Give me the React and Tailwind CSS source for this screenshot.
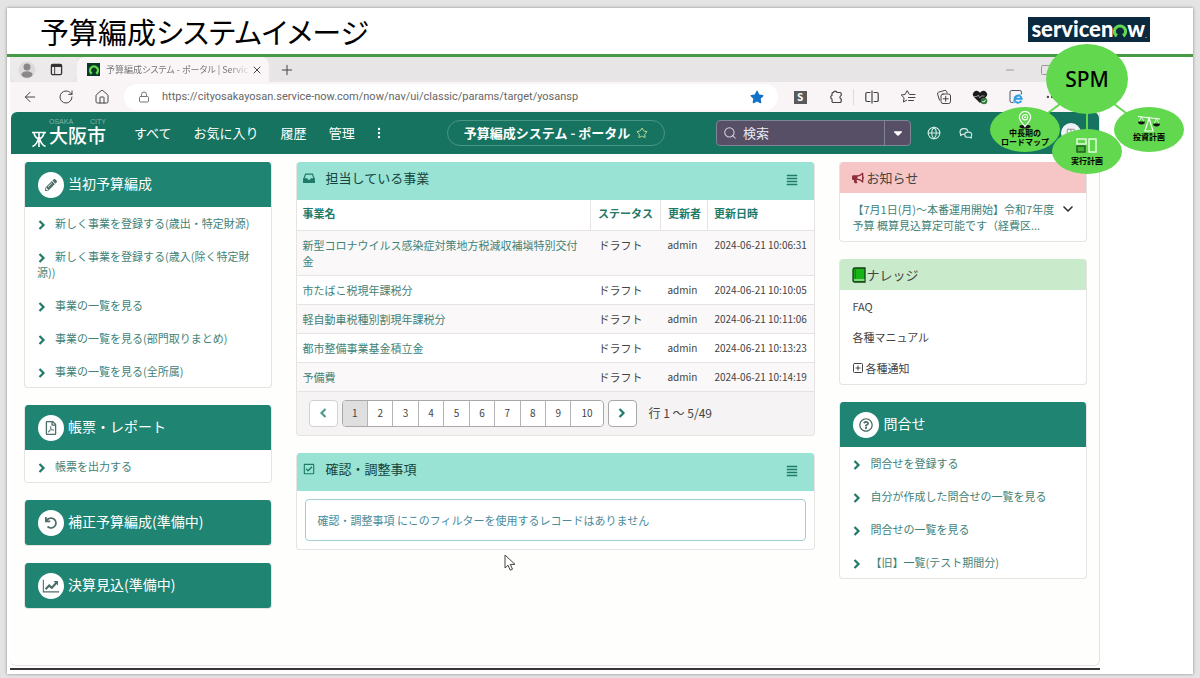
import React, { useState } from 'react';
import {
  FaPencilAlt, FaRegFilePdf, FaUndo,
  FaRegCheckSquare, FaAlignJustify, FaBullhorn, FaRegQuestionCircle, FaStar, FaCaretDown,
} from 'react-icons/fa';
import {
  ArrowLeft, RotateCw, House, Lock, Plus, X, Minus, Square, Columns2, Ellipsis,
  Search, Star, Globe, ChevronDown, SquarePlus,
} from 'lucide-react';

const registerLinks = [
  '新しく事業を登録する(歳出・特定財源)',
  '新しく事業を登録する(歳入(除く特定財源))',
  '事業の一覧を見る',
  '事業の一覧を見る(部門取りまとめ)',
  '事業の一覧を見る(全所属)',
];

const contactLinks = [
  '問合せを登録する',
  '自分が作成した問合せの一覧を見る',
  '問合せの一覧を見る',
  '【旧】一覧(テスト期間分)',
];

const projects = [
  { name: '新型コロナウイルス感染症対策地方税減収補塡特別交付金', updated: '2024-06-21 10:06:31' },
  { name: '市たばこ税現年課税分', updated: '2024-06-21 10:10:05' },
  { name: '軽自動車税種別割現年課税分', updated: '2024-06-21 10:11:06' },
  { name: '都市整備事業基金積立金', updated: '2024-06-21 10:13:23' },
  { name: '予備費', updated: '2024-06-21 10:14:19' },
];

const pages = [1, 2, 3, 4, 5, 6, 7, 8, 9, 10];

function NowRing({ className }) {
  return (
    <svg viewBox="0 0 20 20" className={className} aria-hidden="true">
      <path d="M5.2 17.2A8 8 0 1 1 14.8 17.2" fill="none" stroke="currentColor" strokeWidth="4.4" />
      <path d="M3.2 18.2l2.6-4.4M16.8 18.2l-2.6-4.4" stroke="currentColor" strokeWidth="2.4" />
    </svg>
  );
}

function Chevron({ className }) {
  return (
    <svg viewBox="0 0 10 10" className={className} fill="none" stroke="currentColor" strokeWidth="2.2" aria-hidden="true">
      <path d="M2.5 1l4 4-4 4" />
    </svg>
  );
}

function ChartIcon() {
  return (
    <svg viewBox="0 0 20 16" className="w-[18px] h-4" fill="none" stroke="currentColor" aria-hidden="true">
      <path d="M1.5 1v13.5H19" strokeWidth="1.2" />
      <path d="M4 11.5l4-4 3 2.5 5-5.5" strokeWidth="2.4" />
      <path d="M12.8 2.5h5v5z" fill="currentColor" stroke="none" />
    </svg>
  );
}

function InboxIcon() {
  return (
    <svg viewBox="0 0 14 12" className="w-3 h-3" fill="none" stroke="currentColor" strokeWidth="1.4" aria-hidden="true">
      <path d="M1 7l2-5.5h8L13 7v4H1z" />
      <path d="M1 7h3.500l1 1.800h3L9.500 7H13v4H1z" fill="currentColor" />
    </svg>
  );
}

function TabActionsIcon() {
  return (
    <svg viewBox="0 0 14 14" className="w-[13px] h-[13px]" fill="none" stroke="#333" aria-hidden="true">
      <rect x="1.500" y="1.500" width="11" height="11" rx="1.500" strokeWidth="1.400" />
      <path d="M1.500 3h11" strokeWidth="2.600" />
      <path d="M5 4v8.500" />
    </svg>
  );
}

function ExtensionIcon() {
  return (
    <svg viewBox="0 0 16 16" className="w-4 h-4" fill="none" stroke="currentColor" strokeWidth="1.2" strokeLinejoin="round" aria-hidden="true">
      <path d="M5.500 3.500a1.800 1.800 0 0 1 3.500 0H12a1.200 1.200 0 0 1 1.200 1.200V6.500a1.900 1.900 0 0 0 0 3.600v2.200a1.200 1.200 0 0 1-1.200 1.200H5.200A1.200 1.200 0 0 1 4 12.300V10a1.900 1.900 0 0 1 0-3.600V4.700a1.200 1.200 0 0 1 1.500-1.200z" />
    </svg>
  );
}

function SplitIcon() {
  return (
    <svg viewBox="0 0 16 16" className="w-4 h-4" fill="none" stroke="currentColor" strokeWidth="1.2" aria-hidden="true">
      <path d="M6.500 3.500H3A1.200 1.200 0 0 0 1.800 4.700v6.600A1.200 1.200 0 0 0 3 12.500h3.500M9.500 3.500H13a1.200 1.200 0 0 1 1.200 1.200v6.600a1.200 1.200 0 0 1-1.200 1.200H9.500M8 1.500v13" />
    </svg>
  );
}

function FavoritesIcon() {
  return (
    <svg viewBox="0 0 16 16" className="w-4 h-4" fill="none" stroke="currentColor" strokeLinecap="round" strokeLinejoin="round" aria-hidden="true">
      <path d="M9.2 5.2L7.2 1.6 5.2 5.4 1.2 6l2.9 2.8-.7 4.2 3.3-1.8" />
      <path d="M10 5.5h5M8.5 8.5H15M8.5 11.5h5" />
    </svg>
  );
}

function CollectionsIcon() {
  return (
    <svg viewBox="0 0 16 16" className="w-4 h-4" fill="none" stroke="currentColor" strokeLinecap="round" aria-hidden="true">
      <path d="M3.5 11.2L1.6 5a1.5 1.5 0 0 1 1-1.8l6.2-1.8a1.5 1.5 0 0 1 1.8 1l.4 1.3" />
      <rect x="5" y="5" width="9.5" height="9.5" rx="2" />
      <path d="M9.7 7.3v5M7.2 9.8h5" />
    </svg>
  );
}

function HealthIcon() {
  return (
    <svg viewBox="0 0 16 16" className="w-4 h-4" aria-hidden="true">
      <path d="M8 14L2.2 8.2A3.6 3.6 0 0 1 7 2.8l1 .9 1-.9a3.6 3.6 0 0 1 4.8 5.4z" fill="#1c1c1c" />
      <path d="M2 7.5h3.2l1-1.5 1.6 3 1.3-2h3.5" fill="none" stroke="#a9a9a9" strokeWidth=".8" />
      <circle cx="12" cy="12" r="3.3" fill="#2f7d3b" />
      <path d="M10.5 12l1.1 1.2 2-2.2" fill="none" stroke="#fff" />
    </svg>
  );
}

function IeModeIcon() {
  return (
    <svg viewBox="0 0 16 16" className="w-4 h-4" fill="none" aria-hidden="true">
      <path d="M13.5 5V3.2A1.7 1.7 0 0 0 11.8 1.5H3.7A1.7 1.7 0 0 0 2 3.2v8.600a1.7 1.7 0 0 0 1.700 1.700H5" stroke="#4b5560" />
      <path d="M13.300 11.800A3.600 3.600 0 1 1 13.700 9.700H6.800" stroke="#2d9fe0" strokeWidth="1.900" />
      <path d="M7 13.500c-2 1.500-2.500-1 0-3.800s5.500-5 7.200-4.800" stroke="#2d9fe0" strokeWidth=".8" />
    </svg>
  );
}

function ChatIcon() {
  return (
    <svg viewBox="0 0 16 16" className="w-3.5 h-3.5" fill="none" stroke="currentColor" strokeWidth="1.3" strokeLinejoin="round" aria-hidden="true">
      <path d="M6 9.500H4L1.800 11V9A3.200 3.200 0 0 1 1.200 6.500 4 4 0 0 1 5 3h1.500A3.500 3.500 0 0 1 10 6" />
      <path d="M9.500 7h2a3 3 0 0 1 2.500 4.800v2L12 12.800H9.500a2.900 2.900 0 0 1 0-5.800z" />
    </svg>
  );
}

function BookIcon() {
  return (
    <svg viewBox="0 0 14 16" className="w-3.5 h-4" aria-hidden="true">
      <path d="M1 2.5A1.8 1.8 0 0 1 2.8 1H13v14H2.5A1.5 1.5 0 0 1 1 13.500z" fill="#17b317" stroke="#173d17" strokeWidth="1.3" />
      <path d="M2 13h10.500" stroke="#e6ffe6" strokeWidth="1.2" />
      <path d="M3.300 1.500V12" stroke="#0f7d15" />
    </svg>
  );
}

function CityMark() {
  return (
    <svg viewBox="0 0 16 18" className="w-4 h-[18px]" fill="none" stroke="currentColor" strokeWidth="1.6" aria-hidden="true">
      <path d="M1 2.5h14M3 3c1 4.500 3 5.500 5 5.500S12 7.500 13 3M8 3v14M7 9c-.5 3.500-2.500 6-5.500 7.500M9 9c.5 3.500 2.500 6 5.500 7.500" />
    </svg>
  );
}

function LinkList({ items }) {
  return (
    <ul className="flex flex-col gap-[17px] pl-3 pr-4 py-2 text-[11px] leading-4 text-[#3f8277]">
      {items.map((item) => (
        <li key={item}>
          <Chevron className="inline-block w-2.5 h-2.5 mr-2 text-[#1f7a68]" />
          <a href="#" className="hover:underline">{item}</a>
        </li>
      ))}
    </ul>
  );
}

function MenuCard({ icon, title, children }) {
  return (
    <section className="rounded-sm bg-white border border-t-0 border-[#e6e3e3] overflow-hidden">
      <div className="flex items-center gap-1 h-[45px] pl-[13px] bg-[#208473]">
        <span className="flex items-center justify-center w-[26px] h-[26px] rounded-full bg-white text-[#4d6d68]">{icon}</span>
        <h2 className="pb-1 text-white text-sm leading-5">{title}</h2>
      </div>
      {children}
    </section>
  );
}

function PanelHeader({ icon, title }) {
  return (
    <div className="flex items-center h-[38px] pl-1.5 pr-4 pb-1.5 bg-[#98e3d3] text-[#1f7a68]">
      {icon}
      <h2 className="ml-[11px] text-[13px] leading-5 text-[#17443d]">{title}</h2>
      <button type="button" aria-label="メニュー" className="ml-auto mt-1"><FaAlignJustify className="w-3 h-3" /></button>
    </div>
  );
}

function BrowserBar() {
  return (
    <div>
      <div className="flex items-end h-[25px] bg-[#e7e5e5] text-[#444]">
        <div className="flex items-center h-full w-[67px] pl-2 gap-[14px] bg-[#eceaea] rounded-b-lg">
          <svg viewBox="0 0 18 18" className="w-[18px] h-[18px]" aria-hidden="true">
            <circle cx="9" cy="9" r="8.5" fill="#dcdada" />
            <circle cx="9" cy="6" r="3.5" fill="#8a8888" />
            <ellipse cx="9" cy="13.5" rx="5.5" ry="3.2" fill="#8a8888" />
          </svg>
          <TabActionsIcon />
        </div>
        <div className="flex items-center h-full w-[192px] pl-2.5 pr-1.5 bg-[#faf6f7] rounded-t-lg">
          <span className="flex items-center justify-center w-[13px] h-[13px] shrink-0 bg-[#0c3a2a]">
            <NowRing className="w-2.5 h-2.5 text-[#62d84e]" />
          </span>
          <span className="ml-1.5 flex-1 whitespace-nowrap text-[9px] leading-4 text-[#777] [font-feature-settings:'palt'] [mask-image:linear-gradient(to_right,#000_85%,transparent)]">
            予算編成システム - ポータル | Servic
          </span>
          <button type="button" aria-label="タブを閉じる"><X className="w-3 h-3" strokeWidth={2} /></button>
        </div>
        <button type="button" aria-label="新しいタブ" className="self-center ml-2.5"><Plus className="w-4 h-4" strokeWidth={1.5} /></button>
        <div className="flex items-center gap-6 ml-auto mr-12 h-full text-[#999]">
          <Minus className="w-3 h-3" strokeWidth={2} />
          <Square className="w-3 h-3" strokeWidth={2} />
        </div>
      </div>
      <div className="flex items-center h-[30px] pl-0.5 pr-[30px] bg-[#f9f5f6] text-[#444]">
        <button type="button" aria-label="戻る" className="flex justify-center w-9"><ArrowLeft className="w-4 h-4" strokeWidth={1.5} /></button>
        <button type="button" aria-label="更新" className="flex justify-center w-9"><RotateCw className="w-4 h-4" strokeWidth={1.5} /></button>
        <button type="button" aria-label="ホーム" className="flex justify-center w-9"><House className="w-4 h-4" strokeWidth={1.5} /></button>
        <div className="flex items-center flex-1 h-[26px] ml-1 mr-1 px-3.5 rounded-full bg-white">
          <Lock className="w-3 h-3 text-[#777]" strokeWidth={2} />
          <input
            aria-label="アドレス"
            readOnly
            value="https://cityosakayosan.service-now.com/now/nav/ui/classic/params/target/yosansp"
            className="flex-1 min-w-0 ml-3 bg-transparent outline-none font-['Roboto',sans-serif] text-[11px] leading-4 text-[#666]"
          />
          <FaStar className="w-3.5 h-3.5 text-[#1272c8]" />
        </div>
        <span className="flex justify-center w-9">
          <span className="flex items-center justify-center w-[13px] h-[13px] bg-[#5a5a5a] text-white text-[10px] leading-3 font-bold">S</span>
        </span>
        <span className="flex justify-center w-9 border-r border-[#dcdada]"><ExtensionIcon /></span>
        <span className="flex justify-center w-9"><SplitIcon /></span>
        <span className="flex justify-center w-9"><FavoritesIcon /></span>
        <span className="flex justify-center w-9"><CollectionsIcon /></span>
        <span className="flex justify-center w-9"><HealthIcon /></span>
        <span className="flex justify-center w-9"><IeModeIcon /></span>
        <span className="flex justify-center w-9"><Ellipsis className="w-3.5 h-3.5" strokeWidth={2} /></span>
      </div>
    </div>
  );
}

function PortalHeader() {
  return (
    <header className="grid grid-cols-[1fr_auto_1fr] items-center h-[42px] ml-px pl-5 pr-[18px] rounded-t-md bg-[#15735f] text-white text-[13px] leading-5">
      <div className="flex items-center">
        <div className="flex items-end gap-0.5 mr-7 font-['Liberation_Sans','Noto_Sans_CJK_JP',sans-serif]">
          <CityMark />
          <div>
            <div className="flex justify-between text-[7px] leading-2 text-[#7fb5a8]"><span>OSAKA</span><span>CITY</span></div>
            <div className="text-[19px] leading-[22px] font-medium">大阪市</div>
          </div>
        </div>
        <nav className="flex items-center gap-[22px] whitespace-nowrap">
          <a href="#">すべて</a>
          <a href="#">お気に入り</a>
          <a href="#">履歴</a>
          <a href="#">管理</a>
          <button type="button" aria-label="その他">
            <svg viewBox="0 0 4 12" className="w-1 h-3" fill="currentColor" aria-hidden="true">
              <circle cx="2" cy="2" r="1.2" /><circle cx="2" cy="6" r="1.2" /><circle cx="2" cy="10" r="1.2" />
            </svg>
          </button>
        </nav>
      </div>
      <div className="flex items-center gap-1.5 h-[26px] px-4 rounded-full border border-[#4a9483] font-bold whitespace-nowrap">
        予算編成システム - ポータル
        <Star className="w-3 h-3 text-[#c6dc9a]" strokeWidth={2} />
      </div>
      <div className="flex items-center justify-end">
        <form className="flex items-center w-[195px] h-[26px] rounded-sm border border-[#7f8595] bg-[#564f66]">
          <Search className="w-3.5 h-3.5 ml-1.5 shrink-0 text-[#d5d2dc]" strokeWidth={1.8} />
          <input aria-label="検索" placeholder="検索" className="flex-1 min-w-0 ml-1.5 bg-transparent outline-none text-[13px] leading-5 placeholder:text-[#eceaf0]" />
          <button type="button" aria-label="検索対象" className="flex items-center justify-center w-[26px] h-full border-l border-[#7f8595]">
            <FaCaretDown className="w-3.5 h-3.5" />
          </button>
        </form>
        <Globe className="w-3.5 h-3.5 ml-4 text-[#d8ebe6]" strokeWidth={1.8} />
        <span className="ml-[18px] mr-[88px] text-[#d8ebe6]"><ChatIcon /></span>
        <span className="flex items-center justify-center w-5 h-5 rounded-full bg-[#eef1f6] text-[#888]">
          <Columns2 className="w-2.5 h-2.5" />
        </span>
      </div>
    </header>
  );
}

function ProjectPanel() {
  const [page, setPage] = useState(1);

  return (
    <section className="rounded-sm border border-t-0 border-[#e8e3e3] bg-[#f5f3f3] overflow-hidden">
      <PanelHeader icon={<InboxIcon />} title="担当している事業" />
      <table className="w-full table-fixed bg-white text-left text-[11px] leading-4 text-[#444]">
        <thead className="text-[#1f7a68]">
          <tr className="h-[30px]">
            <th className="pl-1.5 pb-1 font-bold">事業名</th>
            <th className="w-[70px] pl-[7px] pb-1 font-bold border-l border-[#e8e3e3]">ステータス</th>
            <th className="w-[47px] pl-[7px] pb-1 font-bold border-l border-[#e8e3e3]">更新者</th>
            <th className="w-[107px] pl-1.5 pb-1 font-bold border-l border-[#e8e3e3]">更新日時</th>
          </tr>
        </thead>
        <tbody>
          {projects.map((project) => (
            <tr key={project.name} className="border-t border-[#e8e3e3] odd:bg-[#faf8f8] align-top">
              <td className="pl-1.5 pr-2 pt-1.5 pb-1.5"><a href="#" className="text-[#3f8277]">{project.name}</a></td>
              <td className="pl-2 pt-1.5 pb-1.5">ドラフト</td>
              <td className="pl-[7px] pt-1.5 pb-1.5 text-[10px]">admin</td>
              <td className="pl-[7px] pt-1.5 pb-1.5 text-[10px] whitespace-nowrap">{project.updated}</td>
            </tr>
          ))}
        </tbody>
      </table>
      <div className="flex items-center gap-1 px-3 pt-2 pb-2 border-t border-[#e8e3e3] text-[10px] leading-4 text-[#444]">
        <button type="button" aria-label="前へ" className="flex items-center justify-center w-[29px] h-[27px] rounded-sm border border-[#d3d0d0] bg-white text-[#4f9a8a]">
          <Chevron className="w-2.5 h-2.5 rotate-180" />
        </button>
        <div className="flex w-[262px] rounded-sm border border-[#a9a7a7] bg-white overflow-hidden">
          {pages.map((n) => (
            <button
              key={n}
              type="button"
              onClick={() => setPage(n)}
              className={`flex-1 last:flex-none last:w-8 h-[25px] border-l border-[#b5b3b3] first:border-l-0 ${n === page ? 'bg-[#e0dfdf]' : 'bg-white'}`}
            >
              {n}
            </button>
          ))}
        </div>
        <button type="button" aria-label="次へ" className="flex items-center justify-center w-[29px] h-[27px] rounded-sm border border-[#a9a7a7] bg-white text-[#1f7a68]">
          <Chevron className="w-2.5 h-2.5" />
        </button>
        <span className="ml-2 text-xs leading-4">行 1 〜 5/49</span>
      </div>
    </section>
  );
}

function SpmDiagram() {
  return (
    <div className="absolute top-9 right-[9px] w-[194px] h-[130px] text-black font-['Liberation_Sans','Noto_Sans_CJK_JP',sans-serif]">
      <svg viewBox="0 0 194 130" className="absolute inset-0 w-full h-full" aria-hidden="true">
        <path d="M97 40L35 86M97 40V107M97 40L159 86" stroke="#62d84e" strokeWidth="2" />
      </svg>
      <div className="absolute left-[56px] top-0 flex items-center justify-center w-[82px] h-[70px] rounded-[50%] bg-[#62d84e] font-['Noto_Sans',sans-serif] text-[21px] leading-6 font-medium">SPM</div>
      <div className="absolute left-0 top-[63px] flex flex-col items-center w-[70px] h-[45px] pt-1 rounded-[50%] bg-[#62d84e] text-[8px] leading-[9px] font-bold whitespace-nowrap">
        <svg viewBox="0 0 16 19" className="w-4 h-[18px]" fill="none" aria-hidden="true">
          <ellipse cx="8" cy="16.5" rx="6" ry="2" fill="#111" />
          <path d="M8 16.5C5 12 2 10 2 6.500a6 6 0 0 1 12 0C14 10 11 12 8 16.500z" fill="#62d84e" stroke="#fff" strokeWidth="1.2" />
          <circle cx="8" cy="6.5" r="2.8" stroke="#fff" strokeWidth="1.2" />
          <circle cx="8" cy="6.5" r="1" fill="#fff" />
        </svg>
        <span>中長期の</span>
        <span>ロードマップ</span>
      </div>
      <div className="absolute left-[62px] top-[85px] flex flex-col items-center justify-between w-[70px] h-[45px] pt-2 pb-2 rounded-[50%] bg-[#62d84e] text-[8px] leading-[9px] font-bold">
        <svg viewBox="0 0 22 17" className="w-[22px] h-[17px]" fill="none" stroke="#e9ffe4" strokeWidth="1.4" aria-hidden="true">
          <rect x="1" y="2" width="9" height="5" />
          <rect x="1" y="9" width="8" height="6" fill="#43b337" stroke="#1f5a1b" />
          <rect x="13" y="2" width="7" height="13" />
        </svg>
        <span>実行計画</span>
      </div>
      <div className="absolute left-[124px] top-[63px] flex flex-col items-center justify-between w-[70px] h-[45px] pt-2 pb-2.5 rounded-[50%] bg-[#62d84e] text-[8px] leading-[9px] font-bold">
        <svg viewBox="0 0 24 17" className="w-6 h-[17px]" fill="none" stroke="#fff" strokeWidth="1.2" aria-hidden="true">
          <path d="M1 1.5l22 2.500M12 3l-4 13h8z" />
          <path d="M1 6.5a3.500 3 0 0 0 7 0zM16 8.500a3.500 3 0 0 0 7 0z" fill="#111" stroke="none" />
          <path d="M4.5 2L2 6.500M4.500 2L7 6.500M19.500 4L17 8.500M19.500 4L22 8.500" strokeWidth=".7" />
        </svg>
        <span>投資計画</span>
      </div>
    </div>
  );
}

export default function App() {
  return (
    <div className="flex min-h-screen pt-2 pb-1 px-[7px] bg-[#e4e4e4] font-['Noto_Sans_CJK_JP',sans-serif]">
      <div className="relative flex flex-col flex-1 pb-1 bg-white shadow-[0_0_3px_#888]">
        <div className="flex items-center justify-between h-[49px] pl-[33px] pr-[43px] border-b-3 border-[#469a43]">
          <h1 className="text-[29px] leading-10 text-black [font-feature-settings:'palt']">予算編成システムイメージ</h1>
          <div className="flex items-center justify-center w-[122px] h-[25px] mb-1 bg-[#0b2a40] font-['Lato',sans-serif] font-black text-[22px] leading-6 text-white">
            servicen<NowRing className="w-3.5 h-3.5 mt-1 text-[#62d84e]" />w<span className="text-[6px] self-end leading-3">.</span>
          </div>
        </div>

        <div className="flex flex-col flex-1 ml-[3px] mr-[93px] border-b-2 border-[#3a3638]">
          <BrowserBar />
          <div className="flex flex-col flex-1 mb-0.5 rounded-b-md border-r border-b border-[#e4e2e2] bg-[#fefefd]">
            <PortalHeader />
            <main className="grid grid-cols-[1fr_2.1fr_1fr] items-start gap-x-6 pt-2 pb-10 pl-3.5 pr-3">
              <div className="flex flex-col gap-[17px]">
                <MenuCard icon={<FaPencilAlt className="w-3 h-3" />} title="当初予算編成">
                  <LinkList items={registerLinks} />
                </MenuCard>
                <MenuCard icon={<FaRegFilePdf className="w-3.5 h-3.5" />} title="帳票・レポート">
                  <LinkList items={['帳票を出力する']} />
                </MenuCard>
                <MenuCard icon={<FaUndo className="w-3 h-3" />} title="補正予算編成(準備中)" />
                <MenuCard icon={<ChartIcon />} title="決算見込(準備中)" />
              </div>

              <div className="relative flex flex-col gap-[17px]">
                <ProjectPanel />
                <section className="rounded-sm border border-t-0 border-[#e8e3e3] bg-white overflow-hidden">
                  <PanelHeader icon={<FaRegCheckSquare className="w-3 h-3" />} title="確認・調整事項" />
                  <p className="m-2 px-3 py-3 rounded-sm border border-[#a3cdd3] text-[11px] leading-4 text-[#4a8c9b]">
                    確認・調整事項 にこのフィルターを使用するレコードはありません
                  </p>
                </section>
                <svg viewBox="0 0 12 18" className="absolute left-[208px] top-[392px] w-3 h-[18px]" aria-hidden="true">
                  <path d="M1 1v13l3-2.8 2.2 5 2.3-1-2.2-4.8H11z" fill="#fff" stroke="#444" />
                </svg>
              </div>

              <div className="flex flex-col gap-[17px]">
                <section className="rounded-sm border border-t-0 border-[#e6e3e3] bg-white overflow-hidden">
                  <h2 className="flex items-center gap-0.5 h-[31px] pl-3 bg-[#f6c6c6] text-[13px] leading-5 text-[#444]">
                    <FaBullhorn className="w-3 h-3 text-[#8c2f3a]" />
                    お知らせ
                  </h2>
                  <div className="flex items-start justify-between pl-3 pr-2.5 pt-2 pb-2">
                    <a href="#" className="text-[11px] leading-4 text-[#3f8277] whitespace-nowrap">
                      【7月1日(月)〜本番運用開始】令和7年度<br />予算 概算見込算定可能です（経費区...
                    </a>
                    <button type="button" aria-label="開く"><ChevronDown className="w-4 h-4 text-[#333]" strokeWidth={2.5} /></button>
                  </div>
                </section>
                <section className="rounded-sm border border-t-0 border-[#e6e3e3] bg-white overflow-hidden">
                  <h2 className="flex items-center h-[31px] pl-3 bg-[#c9eacb] text-[13px] leading-5 text-[#444]">
                    <BookIcon />
                    ナレッジ
                  </h2>
                  <ul className="flex flex-col gap-[15px] px-3 py-2 text-[11px] leading-4 text-[#444]">
                    <li><a href="#">FAQ</a></li>
                    <li><a href="#">各種マニュアル</a></li>
                    <li className="flex items-center gap-px"><SquarePlus className="w-3 h-3" strokeWidth={2} /><a href="#">各種通知</a></li>
                  </ul>
                </section>
                <MenuCard icon={<FaRegQuestionCircle className="w-3.5 h-3.5" />} title="問合せ">
                  <LinkList items={contactLinks} />
                </MenuCard>
              </div>
            </main>
          </div>
        </div>

        <SpmDiagram />
      </div>
    </div>
  );
}
